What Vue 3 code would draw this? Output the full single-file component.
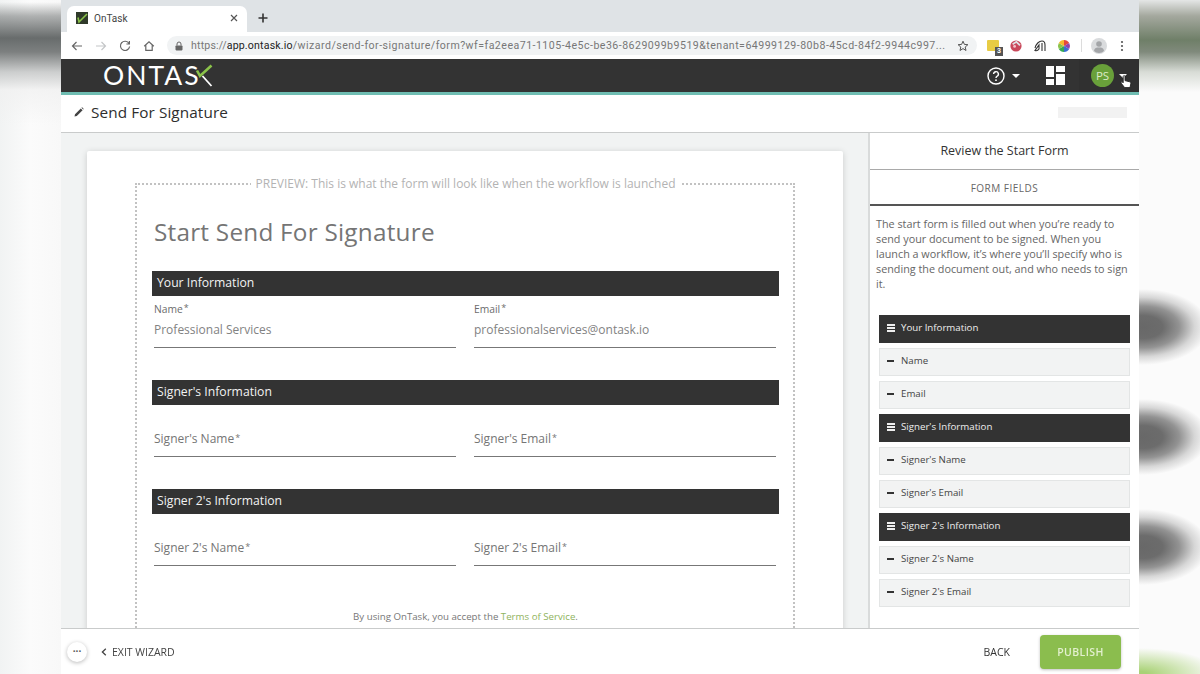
<script setup>
const sections = [
  {
    title: 'Your Information',
    small: true,
    fields: [
      { label: 'Name', value: 'Professional Services' },
      { label: 'Email', value: 'professionalservices@ontask.io' }
    ]
  },
  {
    title: "Signer's Information",
    fields: [{ label: "Signer's Name" }, { label: "Signer's Email" }]
  },
  {
    title: "Signer 2's Information",
    fields: [{ label: "Signer 2's Name" }, { label: "Signer 2's Email" }]
  }
]

const outline = [
  { text: 'Your Information', head: true },
  { text: 'Name' },
  { text: 'Email' },
  { text: "Signer's Information", head: true },
  { text: "Signer's Name" },
  { text: "Signer's Email" },
  { text: "Signer 2's Information", head: true },
  { text: "Signer 2's Name" },
  { text: "Signer 2's Email" }
]
</script>

<template>
  <div class="stage">
    <div class="side side-left"></div>

    <div class="window">
      <div class="tabbar">
        <div class="tab">
          <svg class="favicon" viewBox="0 0 12 12" width="12" height="12">
            <rect width="12" height="12" fill="#2f3a2a" />
            <path d="M2 5.5 L3 10 L11 2" fill="none" stroke="#8bc34a" stroke-width="1.6" />
          </svg>
          <span class="tab-title">OnTask</span>
          <svg class="tab-close" viewBox="0 0 10 10" width="10" height="10">
            <path d="M2 2 L8 8 M8 2 L2 8" stroke="#555" stroke-width="1.2" />
          </svg>
        </div>
        <svg class="tab-new" viewBox="0 0 12 12" width="12" height="12">
          <path d="M6 1.5 V10.5 M1.5 6 H10.5" stroke="#333" stroke-width="1.6" />
        </svg>
      </div>

      <div class="urlbar">
        <div class="url-nav">
          <svg viewBox="0 0 12 12" width="12" height="12"><path d="M11 6 H1.5 M5.5 2 L1.5 6 L5.5 10" fill="none" stroke="#666" stroke-width="1.2" /></svg>
          <svg viewBox="0 0 12 12" width="12" height="12"><path d="M1 6 H10.5 M6.5 2 L10.5 6 L6.5 10" fill="none" stroke="#c4c6c8" stroke-width="1.2" /></svg>
          <svg viewBox="0 0 12 12" width="12" height="12"><path d="M10 3.5 A4.6 4.6 0 1 0 10.6 6.5 M10.4 1 V4 H7.4" fill="none" stroke="#666" stroke-width="1.2" /></svg>
          <svg viewBox="0 0 12 12" width="12" height="12"><path d="M1.2 6.2 L6 1.8 L10.8 6.2 M2.8 5.2 V10.4 H9.2 V5.2" fill="none" stroke="#666" stroke-width="1.2" /></svg>
        </div>
        <div class="omnibox">
          <svg class="lock" viewBox="0 0 10 10" width="10" height="10">
            <rect x="1.5" y="4.4" width="7" height="5" rx="0.8" fill="#666" />
            <path d="M3 4.5 V3 A2 2 0 0 1 7 3 V4.5" fill="none" stroke="#666" stroke-width="1" />
          </svg>
          <span class="url-text"><span class="url-dim">https://</span><span class="url-host">app.ontask.io</span><span class="url-dim url-path">/wizard/send-for-signature/form?wf=fa2eea71-1105-4e5c-be36-8629099b9519&amp;tenant=64999129-80b8-45cd-84f2-9944c997...</span></span>
          <svg class="star" viewBox="0 0 12 12" width="12" height="12">
            <path d="M6 1.2 L7.4 4.4 L10.9 4.7 L8.2 7 L9 10.5 L6 8.6 L3 10.5 L3.8 7 L1.1 4.7 L4.6 4.4 Z" fill="none" stroke="#555" stroke-width="1" />
          </svg>
        </div>
        <div class="extensions">
          <div class="ext-badge"><span class="ext-count">3</span></div>
          <svg viewBox="0 0 14 14" width="14" height="14">
            <circle cx="7" cy="7" r="5.6" fill="#c9485b" />
            <path d="M3.6 5.2 L7.4 2.8 L11 6.4" fill="none" stroke="#dfe4e6" stroke-width="1.8" />
            <circle cx="5.6" cy="7.4" r="1.4" fill="#f0c7cd" />
          </svg>
          <svg viewBox="0 0 14 14" width="14" height="14">
            <path d="M2 9 C3 5 6 2 9 2 C11.5 2 12 4 12 6 L12 12 M9 4 L9 12 M6 6 L6 10 C5 11.5 3.5 12 2 11.5 Z" fill="none" stroke="#333" stroke-width="1.1" />
          </svg>
          <svg class="ext-wheel" viewBox="0 0 14 14" width="14" height="14">
            <path d="M7 7 L7 1 A6 6 0 0 1 12.2 4 Z" fill="#e5483a" />
            <path d="M7 7 L12.2 4 A6 6 0 0 1 12.2 10 Z" fill="#8e44ad" />
            <path d="M7 7 L12.2 10 A6 6 0 0 1 7 13 Z" fill="#3b6fd1" />
            <path d="M7 7 L7 13 A6 6 0 0 1 1.8 10 Z" fill="#35a853" />
            <path d="M7 7 L1.8 10 A6 6 0 0 1 1.8 4 Z" fill="#8bc34a" />
            <path d="M7 7 L1.8 4 A6 6 0 0 1 7 1 Z" fill="#f5b82e" />
          </svg>
          <span class="ext-sep"></span>
          <svg class="profile" viewBox="0 0 16 16" width="16" height="16">
            <circle cx="8" cy="8" r="8" fill="#d9dbdd" />
            <circle cx="8" cy="6" r="2.8" fill="#a3a5a8" />
            <path d="M3 13 C3.5 10 5.5 9.6 8 9.6 C10.5 9.6 12.5 10 13 13 A7 7 0 0 1 3 13 Z" fill="#a3a5a8" />
          </svg>
          <svg class="dots" viewBox="0 0 4 12" width="4" height="12">
            <circle cx="2" cy="2" r="1.1" fill="#555" />
            <circle cx="2" cy="6" r="1.1" fill="#555" />
            <circle cx="2" cy="10" r="1.1" fill="#555" />
          </svg>
        </div>
      </div>

      <header class="appnav">
        <div class="logo">
          <span class="logo-text">ONTAS</span>
          <svg class="logo-k" viewBox="0 0 18 23" width="18" height="23">
            <path d="M2 6.5 L5 12 L16.5 1.5" fill="none" stroke="#8bc34a" stroke-width="2.6" />
            <path d="M7.5 12 L16.5 22" fill="none" stroke="#fff" stroke-width="1.8" />
          </svg>
        </div>
        <div class="nav-help">
          <svg viewBox="0 0 18 18" width="18" height="18">
            <circle cx="9" cy="9" r="8" fill="none" stroke="#fff" stroke-width="1.4" />
            <path d="M6.6 7 A2.4 2.4 0 1 1 9.9 9.3 C9.1 9.7 9 10.2 9 11" fill="none" stroke="#fff" stroke-width="1.4" />
            <circle cx="9" cy="13.2" r="0.9" fill="#fff" />
          </svg>
          <span class="caret"></span>
        </div>
        <svg class="nav-grid" viewBox="0 0 19 19" width="19" height="19">
          <rect x="0" y="0" width="8" height="11" fill="#fff" />
          <rect x="0" y="13" width="8" height="6" fill="#fff" />
          <rect x="10" y="0" width="9" height="6" fill="#fff" />
          <rect x="10" y="8" width="9" height="11" fill="#fff" />
        </svg>
        <div class="nav-user">
          <span class="avatar">PS</span>
          <span class="caret"></span>
          <svg class="pointer" viewBox="0 0 12 14" width="12" height="14">
            <path d="M3.2 1.4 C3.2 0.4 5 0.4 5 1.4 V5.6 L9.6 6.8 C10.6 7.1 11 7.8 10.8 8.8 L10 12.6 H4.6 L1.2 8.2 C0.6 7.2 1.8 6.4 2.6 7.2 L3.2 7.8 Z" fill="#fff" stroke="#222" stroke-width="0.9" />
          </svg>
        </div>
      </header>

      <div class="titlebar">
        <svg class="pencil" viewBox="0 0 10 10" width="10" height="10">
          <path d="M0.5 9.5 L1 7.2 L6.8 1.4 L8.6 3.2 L2.8 9 Z M7.4 0.8 L8.1 0.2 L9.8 1.9 L9.2 2.6 Z" fill="#444" />
        </svg>
        <h1 class="page-title">Send For Signature</h1>
        <span class="faint-tag"></span>
      </div>

      <div class="body">
        <main class="canvas">
          <div class="card">
            <fieldset class="preview">
              <legend class="preview-note">PREVIEW: This is what the form will look like when the workflow is launched</legend>
              <h2 class="form-title">Start Send For Signature</h2>
              <section v-for="section in sections" :key="section.title" class="form-section" :class="{ compact: section.small }">
                <div class="section-bar">{{ section.title }}</div>
                <div class="field-row">
                  <div v-for="field in section.fields" :key="field.label" class="field">
                    <div class="field-label">{{ field.label }}<span class="req">*</span></div>
                    <div v-if="field.value" class="field-value">{{ field.value }}</div>
                  </div>
                </div>
              </section>
              <p class="terms">By using OnTask, you accept the <span class="terms-link">Terms of Service</span>.</p>
            </fieldset>
          </div>
        </main>

        <aside class="panel">
          <div class="panel-head">Review the Start Form</div>
          <div class="panel-tab">FORM FIELDS</div>
          <p class="panel-copy">The start form is filled out when you’re ready to send your document to be signed. When you launch a workflow, it’s where you’ll specify who is sending the document out, and who needs to sign it.</p>
          <ul class="outline">
            <li v-for="item in outline" :key="item.text" class="outline-item" :class="{ head: item.head }">
              <span v-if="item.head" class="ico-head"></span>
              <span v-else class="ico-dash"></span>
              {{ item.text }}
            </li>
          </ul>
        </aside>
      </div>

      <footer class="footer">
        <span class="more">···</span>
        <span class="exit">
          <svg viewBox="0 0 6 8" width="6" height="8"><path d="M4.8 0.8 L1.4 4 L4.8 7.2" fill="none" stroke="#444" stroke-width="1.3" /></svg>
          EXIT WIZARD
        </span>
        <span class="back">BACK</span>
        <button class="publish">PUBLISH</button>
      </footer>
    </div>

    <div class="side side-right"></div>
  </div>
</template>

<style>
html, body { margin: 0; background: #fff; }
</style>

<style scoped>
.stage {
  display: flex;
  width: 1200px;
  height: 674px;
  overflow: hidden;
  font-family: "Open Sans", "Liberation Sans", sans-serif;
}
.side { width: 61px; flex-shrink: 0; }
.side-left {
  background:
    linear-gradient(180deg, rgba(90,95,95,0) 2px, rgba(100,104,104,.5) 16px, #686c6c 38px, #7d8080 52px, rgba(190,192,192,.75) 72px, rgba(240,240,240,.7) 90px, rgba(250,250,250,0) 125px),
    linear-gradient(90deg, #f1f3f3, #fbfbfb 50%, #f8f8f8);
}
.side-right {
  background:
    radial-gradient(ellipse 66px 38px at 4px 327px, #686868 0, #6c6c6c 30%, rgba(112,112,112,.75) 55%, rgba(130,130,130,.3) 78%, rgba(150,150,150,0) 100%),
    radial-gradient(ellipse 66px 38px at 4px 437px, #686868 0, #6c6c6c 30%, rgba(112,112,112,.75) 55%, rgba(130,130,130,.3) 78%, rgba(150,150,150,0) 100%),
    radial-gradient(ellipse 66px 38px at 4px 547px, #686868 0, #6c6c6c 30%, rgba(112,112,112,.75) 55%, rgba(130,130,130,.3) 78%, rgba(150,150,150,0) 100%),
    radial-gradient(ellipse 80px 26px at 0 674px, #a9d276 10%, rgba(200,230,170,0) 100%),
    linear-gradient(180deg, #e4e6e6 0, #a4a89e 16px, #6f7f68 40px, #808a7c 52px, #d8dcd6 72px, #fbfbfb 92px);
}

.window {
  width: 1078px;
  flex-shrink: 0;
  display: flex;
  flex-direction: column;
  background: #fff;
  filter: blur(0.35px);
}

.tabbar {
  height: 32px;
  flex-shrink: 0;
  display: flex;
  align-items: flex-end;
  background: #dfe3e6;
  padding-left: 6px;
}
.tab {
  width: 180px;
  height: 26px;
  display: flex;
  align-items: center;
  background: #fff;
  border-radius: 7px 7px 0 0;
  padding: 0 8px 2px 9px;
  box-sizing: border-box;
}
.favicon { flex-shrink: 0; }
.tab-title {
  flex: 1;
  margin-left: 6px;
  font: 10px "Roboto", "Liberation Sans", sans-serif;
  color: #444;
}
.tab-new { margin: 0 0 8px 10px; }

.urlbar {
  height: 27px;
  flex-shrink: 0;
  display: flex;
  align-items: center;
  background: #fff;
}
.url-nav {
  display: flex;
  gap: 12px;
  padding-left: 10px;
  width: 106px;
  box-sizing: border-box;
}
.omnibox {
  width: 810px;
  height: 19px;
  flex-shrink: 0;
  display: flex;
  align-items: center;
  background: #f1f3f4;
  border-radius: 10px;
  padding: 0 8px 0 7px;
  box-sizing: border-box;
}
.lock { flex-shrink: 0; }
.url-text {
  flex: 1;
  margin-left: 7px;
  font: 10.6px "Roboto", "Liberation Sans", sans-serif;
  letter-spacing: .17px;
  white-space: nowrap;
  overflow: hidden;
}
.url-dim { color: #777; }
.url-path { letter-spacing: .47px; }
.url-host { color: #222; }
.extensions {
  display: flex;
  align-items: center;
  margin-left: 10px;
  position: relative;
  flex: 1;
}
.ext-badge {
  width: 12px;
  height: 11px;
  background: #e8cc44;
  border-radius: 1px;
  position: relative;
  margin-right: 10px;
}
.ext-count {
  position: absolute;
  right: -4px;
  bottom: -5px;
  width: 8px;
  height: 9px;
  background: #555;
  color: #fff;
  font: 700 7px/9px "Roboto", sans-serif;
  text-align: center;
}
.extensions svg { margin-right: 10px; flex-shrink: 0; }
.ext-sep { width: 1px; height: 13px; background: #dcdcdc; margin: 0 9px 0 0; }
.extensions .profile { margin-right: 13px; }

.appnav {
  height: 36px;
  flex-shrink: 0;
  display: flex;
  align-items: center;
  background: #333;
  border-bottom: 3px solid #6fbdb2;
  box-sizing: border-box;
  padding-left: 42px;
}
.logo { display: flex; align-items: flex-start; height: 33px; }
.logo-text {
  font: 400 26.5px/33px "Lato", "Open Sans", sans-serif;
  color: #fff;
  letter-spacing: 2px;
}
.logo-k { margin: 5px 0 0 -6px; }
.nav-help {
  display: flex;
  align-items: center;
  gap: 7px;
  margin-left: auto;
}
.caret {
  width: 0;
  height: 0;
  border-left: 4px solid transparent;
  border-right: 4px solid transparent;
  border-top: 4px solid #fff;
}
.nav-grid { margin-left: 26px; margin-top: -1px; }
.nav-user {
  width: 60px;
  height: 33px;
  margin-left: 14px;
  display: flex;
  align-items: center;
  background: #303030;
  position: relative;
  padding-left: 12px;
  box-sizing: border-box;
}
.avatar {
  width: 23px;
  height: 23px;
  border-radius: 50%;
  background: #69a03a;
  color: #dcebc8;
  font: 11.5px/23px "Open Sans", sans-serif;
  text-align: center;
  margin-right: 5px;
}
.pointer { position: absolute; left: 41px; top: 16px; }

.titlebar {
  height: 38px;
  flex-shrink: 0;
  display: flex;
  align-items: center;
  padding: 0 12px 3px 13px;
  border-bottom: 1px solid #c9cbcb;
  box-sizing: border-box;
}
.page-title {
  margin: 0 0 0 7px;
  font: 400 15.3px "Open Sans", sans-serif;
  letter-spacing: .1px;
  color: #2e2e2e;
}
.faint-tag {
  margin-left: auto;
  width: 69px;
  height: 11px;
  background: #f2f2f2;
}

.body { flex: 1; display: flex; min-height: 0; }

.canvas {
  flex: 1;
  min-width: 0;
  background: #f1f3f3;
  padding: 18px 26px 0;
  overflow: hidden;
  border-right: 2px solid #d9dbdb;
}
.card {
  width: 756px;
  height: 540px;
  background: #fff;
  box-shadow: 0 1px 6px rgba(0,0,0,.16);
  border-radius: 2px;
  padding: 24px 48px 0;
  box-sizing: border-box;
}
.preview {
  margin: 0;
  padding: 0 14px 0 15px;
  height: 560px;
  border: 2px dotted #c2c2c2;
  box-sizing: border-box;
  min-width: 0;
}
.preview-note {
  margin: 0 auto;
  padding: 0 5px;
  font-size: 12px;
  line-height: 17px;
  color: #b3b3b3;
  white-space: nowrap;
}
.form-title {
  margin: 23px 0 22px 2px;
  font: 400 24.3px/34px "Open Sans", sans-serif;
  letter-spacing: .24px;
  color: #757575;
}
.form-section { margin-bottom: 32px; }
.section-bar {
  height: 25px;
  background: #333;
  color: #f2f2f2;
  font-size: 12.2px;
  line-height: 24px;
  padding-left: 5px;
}
.field-row {
  display: grid;
  grid-template-columns: 302px 302px;
  gap: 18px;
  margin-left: 2px;
}
.field {
  height: 52px;
  border-bottom: 1px solid #777;
  box-sizing: border-box;
  padding-top: 24px;
  font-size: 12px;
  color: #757575;
}
.compact .field { padding-top: 5px; }
.compact .field-label { font-size: 10.3px; line-height: 14px; color: #6c6c6c; }
.field-label { line-height: 18px; }
.req { font-size: 9px; vertical-align: 2px; margin-left: 1px; }
.field-value {
  margin-top: 5px;
  font-size: 12px;
  line-height: 18px;
  color: #828282;
}
.terms {
  margin: 44px 0 0;
  text-align: center;
  font-size: 9.7px;
  line-height: 14px;
  color: #777;
}
.terms-link { color: #8fb35c; }

.panel {
  width: 269px;
  flex-shrink: 0;
  overflow: hidden;
}
.panel-head {
  height: 37px;
  box-sizing: border-box;
  border-bottom: 1px solid #a9a9a9;
  text-align: center;
  font-size: 12.5px;
  font-weight: 500;
  line-height: 35px;
  color: #333;
}
.panel-tab {
  height: 36px;
  box-sizing: border-box;
  border-bottom: 2px solid #555;
  text-align: center;
  font-size: 10px;
  letter-spacing: .5px;
  line-height: 37px;
  color: #666;
}
.panel-copy {
  margin: 10px 8px 0 6px;
  font-size: 10.8px;
  line-height: 15px;
  color: #666;
}
.outline {
  list-style: none;
  margin: 24px 9px 0;
  padding: 0;
  display: flex;
  flex-direction: column;
  gap: 5px;
}
.outline-item {
  height: 28px;
  box-sizing: border-box;
  display: flex;
  align-items: center;
  gap: 6px;
  padding: 0 0 3px 7px;
  background: #f2f3f3;
  border: 1px solid #e3e5e5;
  font-size: 9.7px;
  color: #444;
}
.outline-item.head {
  background: #333;
  border-color: #333;
  color: #eee;
}
.ico-dash { width: 7px; height: 2px; background: #333; margin-right: 1px; }
.ico-head {
  width: 8px;
  height: 8px;
  border-top: 2px solid #eee;
  border-bottom: 2px solid #eee;
  box-sizing: border-box;
  background: linear-gradient(#eee, #eee) center / 100% 2px no-repeat;
}

.footer {
  height: 46px;
  flex-shrink: 0;
  display: flex;
  align-items: center;
  background: #fff;
  border-top: 1px solid #c9cbcb;
  box-sizing: border-box;
  padding: 0 18px 0 6px;
}
.more {
  width: 20px;
  height: 20px;
  border-radius: 50%;
  background: #fff;
  box-shadow: 0 1px 4px rgba(0,0,0,.28);
  text-align: center;
  font: 700 10px/19px "Open Sans", sans-serif;
  color: #555;
}
.exit {
  display: flex;
  align-items: center;
  gap: 5px;
  margin-left: 14px;
  font-size: 10.5px;
  color: #444;
}
.back {
  margin-left: auto;
  font-size: 10.5px;
  color: #333;
}
.publish {
  width: 81px;
  height: 34px;
  margin-left: 30px;
  border: 0;
  border-radius: 4px;
  background: #8bbd4e;
  box-shadow: 0 1px 3px rgba(0,0,0,.25);
  color: #e3f0cf;
  font: 600 10.5px "Open Sans", sans-serif;
  letter-spacing: .4px;
}
</style>
